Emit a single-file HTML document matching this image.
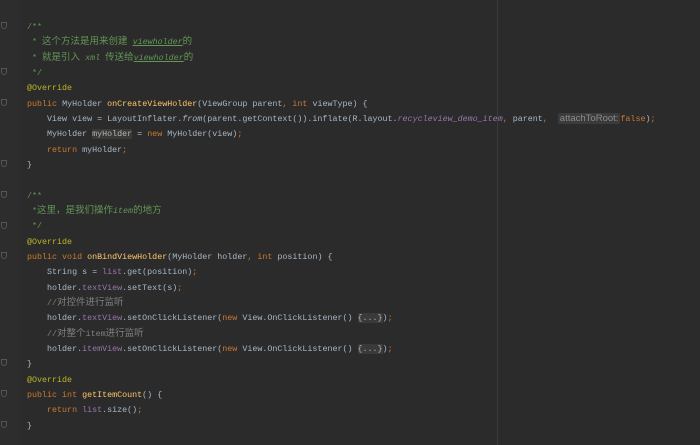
<!DOCTYPE html>
<html><head><meta charset="utf-8"><style>
html,body{margin:0;padding:0;background:#2b2b2b;width:700px;height:445px;overflow:hidden}
.g{position:absolute;left:0;top:0;width:20px;height:445px;background:#2d2d2d}
.m{position:absolute;left:497px;top:0;width:1px;height:445px;background:#3a3a3a}
.l{position:absolute;left:27px;white-space:pre;font-family:"Liberation Mono","Noto Sans CJK SC",monospace;font-size:8.35px;line-height:12px;color:#a9b7c6}
.l .z{font-size:9.5px}
.k{color:#cc7832}.c{color:#629755}.ci{color:#629755;font-style:italic;text-decoration:underline}.a{color:#bbb529}.f{color:#9876aa}.fi{color:#9876aa;font-style:italic}.d{color:#ffc66d}.lc{color:#808080}.i{font-style:italic}
.h{background:#3b3a32}
.hint{background:#3b3b3b;color:#8c8c8c;font-family:"Liberation Sans",sans-serif;font-size:9.5px;border-radius:2px;padding:0 2px}
.fold{background:#3a3a3a;color:#a9b7c6}
.fm{position:absolute;left:1px;width:6px;height:7px;border:1px solid #555;border-radius:0 0 3px 3px;box-sizing:border-box}
</style></head><body>
<div class="g"></div><div class="m"></div>
<div class="fm" style="top:22px"></div><div class="fm" style="top:68px"></div><div class="fm" style="top:99px"></div><div class="fm" style="top:160px"></div><div class="fm" style="top:191px"></div><div class="fm" style="top:222px"></div><div class="fm" style="top:252px"></div><div class="fm" style="top:359px"></div><div class="fm" style="top:390px"></div><div class="fm" style="top:421px"></div>
<div class="l" style="top:21px"><span class="c">/**</span></div>
<div class="l" style="top:36px"><span class="c"> * <span class="z">这个方法是用来创建</span> <span class="ci">viewholder</span><span class="z">的</span></span></div>
<div class="l" style="top:52px"><span class="c"> * <span class="z">就是引入</span> <i>xml</i> <span class="z">传送给</span><span class="ci">viewholder</span><span class="z">的</span></span></div>
<div class="l" style="top:67px"><span class="c"> */</span></div>
<div class="l" style="top:82px"><span class="a">@Override</span></div>
<div class="l" style="top:98px"><span class="k">public </span>MyHolder <span class="d">onCreateViewHolder</span>(ViewGroup parent<span class="k">, int </span>viewType) {</div>
<div class="l" style="top:113px">    View view = LayoutInflater.<span class="i">from</span>(parent.getContext()).inflate(R.layout.<span class="fi">recycleview_demo_item</span><span class="k">, </span>parent<span class="k">, </span> <span class="hint">attachToRoot:</span><span class="k">false</span>)<span class="k">;</span></div>
<div class="l" style="top:128px">    MyHolder <span class="h">myHolder</span> = <span class="k">new </span>MyHolder(view)<span class="k">;</span></div>
<div class="l" style="top:144px">    <span class="k">return </span>myHolder<span class="k">;</span></div>
<div class="l" style="top:159px">}</div>
<div class="l" style="top:190px"><span class="c">/**</span></div>
<div class="l" style="top:205px"><span class="c"> *<span class="z">这里，是我们操作</span><i>item</i><span class="z">的地方</span></span></div>
<div class="l" style="top:220px"><span class="c"> */</span></div>
<div class="l" style="top:236px"><span class="a">@Override</span></div>
<div class="l" style="top:251px"><span class="k">public void </span><span class="d">onBindViewHolder</span>(MyHolder holder<span class="k">, int </span>position) {</div>
<div class="l" style="top:266px">    String s = <span class="f">list</span>.get(position)<span class="k">;</span></div>
<div class="l" style="top:282px">    holder.<span class="f">textView</span>.setText(s)<span class="k">;</span></div>
<div class="l" style="top:297px">    <span class="lc">//<span class="z">对控件进行监听</span></span></div>
<div class="l" style="top:312px">    holder.<span class="f">textView</span>.setOnClickListener(<span class="k">new </span>View.OnClickListener() <span class="fold">{...}</span>)<span class="k">;</span></div>
<div class="l" style="top:328px">    <span class="lc">//<span class="z">对整个</span>item<span class="z">进行监听</span></span></div>
<div class="l" style="top:343px">    holder.<span class="f">itemView</span>.setOnClickListener(<span class="k">new </span>View.OnClickListener() <span class="fold">{...}</span>)<span class="k">;</span></div>
<div class="l" style="top:358px">}</div>
<div class="l" style="top:374px"><span class="a">@Override</span></div>
<div class="l" style="top:389px"><span class="k">public int </span><span class="d">getItemCount</span>() {</div>
<div class="l" style="top:404px">    <span class="k">return </span><span class="f">list</span>.size()<span class="k">;</span></div>
<div class="l" style="top:420px">}</div>
</body></html>
